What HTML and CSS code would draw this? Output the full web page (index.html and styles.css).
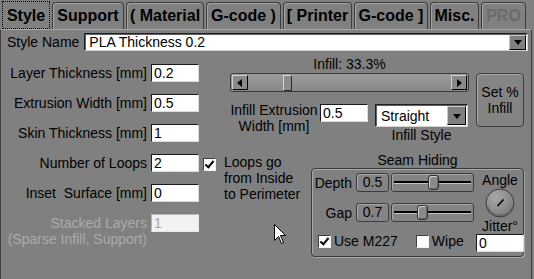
FILE: index.html
```html
<!DOCTYPE html>
<html lang="en">
<head>
  <meta charset="UTF-8">
  <title>Style Settings</title>
  <link rel="stylesheet" href="styles.css">
</head>
<body>
  <div class="app">
    <!-- Tabs -->
    <nav class="tabs">
      <div class="tab active">Style</div>
      <div class="tab">Support</div>
      <div class="tab">( Material</div>
      <div class="tab">G-code )</div>
      <div class="tab">[ Printer</div>
      <div class="tab">G-code ]</div>
      <div class="tab">Misc.</div>
      <div class="tab disabled">PRO</div>
    </nav>

    <section class="panel">
      <div class="name-row">
        <label>Style Name</label>
        <div class="select wide"><span class="select-text">PLA Thickness 0.2</span><span class="drop"></span></div>
      </div>

      <div class="main">
        <!-- Left column: basic fields -->
        <div class="fields">
          <label>Layer Thickness [mm]</label>
          <input class="text" value="0.2">
          <span></span>

          <label>Extrusion Width [mm]</label>
          <input class="text" value="0.5">
          <span></span>

          <label>Skin Thickness [mm]</label>
          <input class="text" value="1">
          <span></span>

          <label>Number of Loops</label>
          <input class="text" value="2">
          <div class="loops">
            <span class="check on"></span>
            <span class="loops-text">Loops go<br>from Inside<br>to Perimeter</span>
          </div>

          <label class="pre">Inset  Surface [mm]</label>
          <input class="text" value="0">

          <label class="dim">Stacked Layers<br>(Sparse Infill, Support)</label>
          <input class="text" value="1" disabled>
        </div>

        <!-- Right column: infill + seam -->
        <div class="right">
          <div class="infill">
            <div class="infill-label">Infill: 33.3%</div>
            <div class="scroll">
              <span class="arrow-btn left"></span>
              <div class="scroll-track"><span class="scroll-thumb"></span></div>
              <span class="arrow-btn right"></span>
            </div>
            <div class="set-btn">Set %<br>Infill</div>
            <div class="infill-opts">
              <label class="infill-width">Infill Extrusion<br>Width [mm]</label>
              <input class="text infill-input" value="0.5">
              <div class="style-pick">
                <div class="select small"><span class="select-text">Straight</span><span class="drop"></span></div>
                <span class="caption">Infill Style</span>
              </div>
            </div>
          </div>

          <div class="seam">
            <div class="seam-title">Seam Hiding</div>
            <div class="group">
              <div class="seam-rows">
                <div class="seam-row">
                  <span class="seam-label">Depth</span>
                  <span class="value-box">0.5</span>
                  <div class="slider"><span class="slider-thumb depth"></span></div>
                </div>
                <div class="seam-row">
                  <span class="seam-label">Gap</span>
                  <span class="value-box">0.7</span>
                  <div class="slider"><span class="slider-thumb gap"></span></div>
                </div>
                <div class="check-row">
                  <span class="check on"></span><span class="check-label">Use M227</span>
                  <span class="check wipe"></span><span class="check-label">Wipe</span>
                </div>
              </div>
              <div class="angle">
                <span>Angle</span>
                <svg class="knob" width="30" height="30" viewBox="0 0 30 30">
                  <defs>
                    <radialGradient id="kg" cx="0.35" cy="0.3" r="0.8">
                      <stop offset="0" stop-color="#a8a8a8"/>
                      <stop offset="1" stop-color="#787878"/>
                    </radialGradient>
                  </defs>
                  <circle cx="15" cy="15" r="14" fill="url(#kg)" stroke="#3a3a3a" stroke-width="1"/>
                  <path d="M2.5 18 A13 13 0 0 0 27.5 18" fill="none" stroke="#5a5a5a" stroke-width="1"/>
                  <line x1="12.5" y1="18" x2="18.5" y2="11.5" stroke="#000" stroke-width="1.6"/>
                </svg>
                <span class="jitter">Jitter°</span>
                <input class="text jitter-input" value="0">
              </div>
            </div>
          </div>
        </div>
      </div>
    </section>

    <!-- mouse pointer over the panel -->
    <svg class="cursor" width="13" height="21" viewBox="0 0 13 21">
      <path d="M0.5 0.5 L0.5 16.5 L4.5 12.5 L7.5 19.5 L9.5 18.5 L6.5 11.5 L11.5 11.5 Z" fill="#fff" stroke="#000" stroke-width="1"/>
    </svg>
  </div>
</body>
</html>
```

FILE: styles.css
```css
/* Base */
* { box-sizing: border-box; margin: 0; padding: 0; }
body {
  font-family: 'Liberation Sans', Arial, sans-serif;
  font-size: 14px;
  color: #000;
  background: #808080;
}
.app {
  position: relative;
  width: 534px;
  height: 279px;
  background: #808080;
  overflow: hidden;
}

/* Tabs */
.tabs {
  display: flex;
  gap: 2px;
  height: 29px;
  padding: 2px 0 0 2px;
}
.tab {
  flex: none;
  height: 27px;
  border: 1px solid #3c3c3c;
  border-bottom: none;
  border-radius: 4px 4px 0 0;
  box-shadow: inset 1px 1px 0 #a6a6a6;
  font-size: 16px;
  font-weight: bold;
  line-height: 26px;
  text-align: center;
  white-space: nowrap;
}
.tab:nth-child(1) { width: 48px; }
.tab:nth-child(2) { width: 72px; }
.tab:nth-child(3) { width: 78px; }
.tab:nth-child(4) { width: 75px; }
.tab:nth-child(5) { width: 69px; }
.tab:nth-child(6) { width: 74px; }
.tab:nth-child(7) { width: 49px; }
.tab:nth-child(8) { width: 45px; }
.tab.active {
  height: 28px;
  margin-top: -1px;
  border: 1px dotted #000;
  border-radius: 0;
  box-shadow: none;
  line-height: 28px;
}
.tab.disabled { color: #6c6c6c; }

/* Panel */
.panel {
  width: 532px;
  height: 250px;
  border-top: 1px solid #a8a8a8;
  border-left: 1px solid #404040;
  border-right: 1px solid #404040;
}
.name-row {
  display: flex;
  align-items: center;
  gap: 5px;
  height: 21px;
  padding: 3px 0 0 6px;
}

/* Combo boxes */
.select {
  display: flex;
  align-items: center;
  justify-content: space-between;
  background: #fff;
  border: 1px solid;
  border-color: #202020 #d4d4d4 #d4d4d4 #202020;
  box-shadow: inset 1px 1px 0 #606060;
}
.select.wide { width: 444px; height: 18px; }
.select.small { width: 93px; height: 23px; }
.select-text { padding-left: 4px; line-height: 16px; }
.select.small .select-text { padding-left: 5px; }
.drop {
  position: relative;
  width: 17px;
  height: 15px;
  margin-right: 1px;
  background: #808080;
  border: 1px solid;
  border-color: #c8c8c8 #000 #000 #c8c8c8;
}
.select.small .drop { height: 19px; width: 19px; }
.drop::after {
  content: "";
  position: absolute;
  left: 50%;
  top: 50%;
  margin: -2px 0 0 -4px;
  border-left: 4px solid transparent;
  border-right: 4px solid transparent;
  border-top: 5px solid #000;
}

/* Text inputs */
input.text {
  width: 48px;
  height: 18px;
  padding: 0 2px;
  border: 1px solid;
  border-color: #1a1a1a #dcdcdc #dcdcdc #1a1a1a;
  background: #fff;
  font: inherit;
  color: #000;
  outline: none;
}
input.text:disabled {
  background: #f2f2f2;
  border-color: #b8b8b8 #e8e8e8 #e8e8e8 #b8b8b8;
  color: #a6a6a6;
}

/* Main area */
.main { display: flex; }
.fields {
  display: grid;
  grid-template-columns: 146px 48px 30px;
  grid-auto-rows: 18px;
  column-gap: 4px;
  row-gap: 12px;
  width: 229px;
  padding-top: 13px;
}
.fields label {
  text-align: right;
  line-height: 18px;
  white-space: nowrap;
}
.fields label.pre { white-space: pre; }
.fields label.dim {
  color: #aaaaaa;
  line-height: 16px;
  margin-top: 1px;
}
.loops {
  grid-row: span 3;
  display: flex;
  gap: 8px;
  white-space: nowrap;
}
.loops .check { margin-top: 4px; }
.loops-text { line-height: 16px; }

/* Checkboxes */
.check {
  position: relative;
  flex: none;
  width: 13px;
  height: 13px;
  background: #fff;
  border: 1px solid;
  border-color: #404040 #f0f0f0 #f0f0f0 #404040;
}
.check.on::after {
  content: "";
  position: absolute;
  left: 3px;
  top: 0px;
  width: 3px;
  height: 7px;
  border: solid #000;
  border-width: 0 2px 2px 0;
  transform: rotate(40deg);
}

/* Right column */
.right {
  width: 296px;
  padding-top: 5px;
}
.infill {
  display: grid;
  grid-template-columns: 239px 48px;
  column-gap: 7px;
}
.infill-label {
  grid-column: 1;
  text-align: center;
  line-height: 17px;
}
.scroll {
  grid-column: 1;
  grid-row: 2;
  display: flex;
  align-items: center;
  height: 19px;
  padding: 0 1px;
  border: 1px solid #3c3c3c;
  border-radius: 3px;
  background: linear-gradient(#9c9c9c, #888888);
}
.arrow-btn {
  position: relative;
  flex: none;
  width: 16px;
  height: 15px;
  background: #8a8a8a;
  border: 1px solid;
  border-color: #d0d0d0 #000 #000 #d0d0d0;
}
.arrow-btn::after {
  content: "";
  position: absolute;
  top: 3px;
  border-top: 4px solid transparent;
  border-bottom: 4px solid transparent;
}
.arrow-btn.left::after { left: 4px; border-right: 5px solid #000; }
.arrow-btn.right::after { left: 5px; border-left: 5px solid #000; }
.scroll-track {
  flex: 1;
  display: flex;
  align-items: center;
}
.scroll-thumb {
  width: 9px;
  height: 16px;
  margin-left: 35px;
  background: #8c8c8c;
  border: 1px solid;
  border-color: #d8d8d8 #2a2a2a #2a2a2a #d8d8d8;
  border-radius: 1px;
}
.set-btn {
  grid-column: 2;
  grid-row: 2 / span 2;
  display: flex;
  align-items: center;
  justify-content: center;
  height: 54px;
  border: 1px solid #3c3c3c;
  border-radius: 4px;
  box-shadow: inset 1px 1px 0 #a6a6a6;
  background: #848484;
  text-align: center;
  line-height: 16px;
}
.infill-opts {
  grid-column: 1;
  grid-row: 3;
  display: flex;
  align-items: flex-start;
  margin-top: 12px;
}
.infill-width {
  width: 88px;
  margin-top: -2px;
  text-align: center;
  line-height: 16px;
  white-space: nowrap;
}
.infill-input { margin-left: 2px; width: 49px; }
.style-pick {
  display: flex;
  flex-direction: column;
  align-items: center;
  margin-left: 7px;
}
.caption { line-height: 16px; }

/* Seam hiding group */
.seam {
  width: 213px;
  margin: 9px 0 0 81px;
}
.seam-title {
  text-align: center;
  line-height: 16px;
}
.group {
  display: grid;
  grid-template-columns: 1fr 38px;
  height: 89px;
  padding: 4px 4px 0 0;
  border: 1px solid #3a3a3a;
  border-radius: 4px;
  box-shadow: 1px 1px 0 #a8a8a8, inset 1px 1px 0 #a8a8a8;
}
.seam-rows {
  display: flex;
  flex-direction: column;
  gap: 11px;
}
.seam-row {
  display: flex;
  align-items: center;
  height: 19px;
}
.seam-label {
  width: 40px;
  text-align: right;
}
.value-box {
  width: 33px;
  height: 19px;
  margin: 0 2px 0 4px;
  border: 1px solid #3c3c3c;
  border-radius: 3px;
  box-shadow: inset 1px 1px 0 #a6a6a6;
  background: #848484;
  text-align: center;
  line-height: 17px;
}
.slider {
  display: flex;
  align-items: center;
  width: 83px;
  height: 19px;
  padding: 0 2px;
  border: 1px solid #3c3c3c;
  border-radius: 3px;
  box-shadow: inset 1px 1px 0 #a6a6a6;
  background:
    linear-gradient(to bottom, transparent 7px, #000 7px, #000 9px, #c4c4c4 9px, #c4c4c4 10px, transparent 10px)
    no-repeat 2px 0 / 77px 100%,
    #848484;
}
.slider-thumb {
  width: 11px;
  height: 15px;
  background: #8a8a8a;
  border: 1px solid #2e2e2e;
  border-radius: 3px;
  box-shadow: inset 1px 1px 0 #d0d0d0, inset -1px -1px 0 #6a6a6a;
}
.slider-thumb.depth { margin-left: 34px; }
.slider-thumb.gap { margin-left: 23px; }
.check-row {
  display: flex;
  align-items: center;
  padding-left: 6px;
}
.check-label { margin-left: 3px; line-height: 16px; }
.check.wipe { margin-left: 18px; }

/* Angle / jitter */
.angle {
  display: flex;
  flex-direction: column;
  align-items: center;
  margin-top: -1px;
  line-height: 16px;
}
.knob { display: block; }
.jitter-input { width: 38px; }

/* Mouse pointer */
.cursor {
  position: absolute;
  left: 274px;
  top: 224px;
}
```
